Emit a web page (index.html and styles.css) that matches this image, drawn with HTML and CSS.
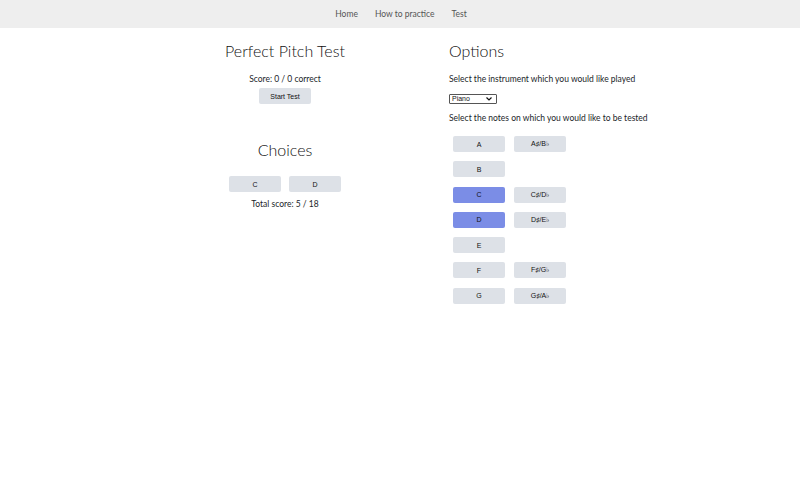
FILE: index.html
```html
<!DOCTYPE html>
<html>
<head>
<meta charset="utf-8">
<link rel="stylesheet" href="styles.css">
</head>
<body>
<nav class="nav">
  <a href="#">Home</a>
  <a href="#">How to practice</a>
  <a href="#">Test</a>
</nav>
<main class="main">
  <section class="left">
    <h1 class="title">Perfect Pitch Test</h1>
    <p class="score">Score: 0 / 0 correct</p>
    <button class="btn">Start Test</button>
    <h2 class="title choices-title">Choices</h2>
    <div class="choices">
      <button class="btn">C</button>
      <button class="btn">D</button>
    </div>
    <p class="total">Total score: 5 / 18</p>
  </section>
  <section class="right">
    <h2 class="title">Options</h2>
    <p class="label">Select the instrument which you would like played</p>
    <div class="select-wrap">
      <select class="select"><option>Piano</option></select>
      <svg class="chev" width="6" height="4" viewBox="0 0 6 4"><path d="M0.5 0.5 L3 3 L5.5 0.5" fill="none" stroke="#111" stroke-width="1.2"/></svg>
    </div>
    <p class="label label2">Select the notes on which you would like to be tested</p>
    <div class="notes">
      <button class="btn">A</button><button class="btn">A♯/B♭</button>
      <button class="btn">B</button><span></span>
      <button class="btn on">C</button><button class="btn">C♯/D♭</button>
      <button class="btn on">D</button><button class="btn">D♯/E♭</button>
      <button class="btn">E</button><span></span>
      <button class="btn">F</button><button class="btn">F♯/G♭</button>
      <button class="btn">G</button><button class="btn">G♯/A♭</button>
    </div>
  </section>
</main>
</body>
</html>
```
FILE: styles.css
```css
* { box-sizing: border-box; }
body {
  margin: 0;
  font-family: Lato, "Open Sans", sans-serif;
  font-size: 8.5px;
  color: #212529;
  background: #fff;
}
.nav {
  height: 28px;
  background: #eeeeee;
  display: flex;
  justify-content: center;
  align-items: center;
  gap: 17px;
  padding-left: 2px;
}
.nav a {
  color: #555;
  text-decoration: none;
  font-size: 8.5px;
}
.main {
  display: flex;
  justify-content: center;
  padding-top: 11px;
}
.left {
  width: 230px;
  display: flex;
  flex-direction: column;
  align-items: center;
}
.right {
  width: 230px;
  padding-left: 49px;
}
.title {
  margin: 0;
  font-weight: 300;
  font-size: 16px;
  line-height: 24px;
  color: #111;
  white-space: nowrap;
}
.score {
  margin: 10px 0 2px;
  line-height: 13px;
  white-space: nowrap;
}
.btn {
  font-family: "Liberation Sans", Arial, sans-serif;
  font-size: 7px;
  color: #111;
  background: #dde1e7;
  border: none;
  border-radius: 2px;
  width: 52px;
  height: 16px;
  padding: 0;
}
.btn.on { background: #7b8de6; }
.choices-title { margin-top: 34px; }
.choices {
  display: flex;
  gap: 8px;
  margin-top: 14px;
}
.total {
  margin: 6px 0 0;
  line-height: 13px;
}
.label {
  margin: 10px 0 0;
  line-height: 13px;
  white-space: nowrap;
}
.select-wrap {
  position: relative;
  width: 48px;
  height: 10px;
  margin-top: 8px;
}
.select {
  appearance: none;
  -webkit-appearance: none;
  font-family: "Liberation Sans", Arial, sans-serif;
  font-size: 7px;
  line-height: 8px;
  width: 48px;
  height: 10px;
  padding: 0 0 0 2px;
  border: 1px solid #555;
  border-radius: 1px;
  display: block;
  background: #fff;
  color: #111;
}
.chev {
  position: absolute;
  right: 5px;
  top: 3px;
  pointer-events: none;
}
.label2 { margin-top: 8px; }
.notes {
  display: grid;
  grid-template-columns: 52px 52px;
  column-gap: 9px;
  row-gap: 9.3px;
  margin: 11px 0 0 4px;
}
```
